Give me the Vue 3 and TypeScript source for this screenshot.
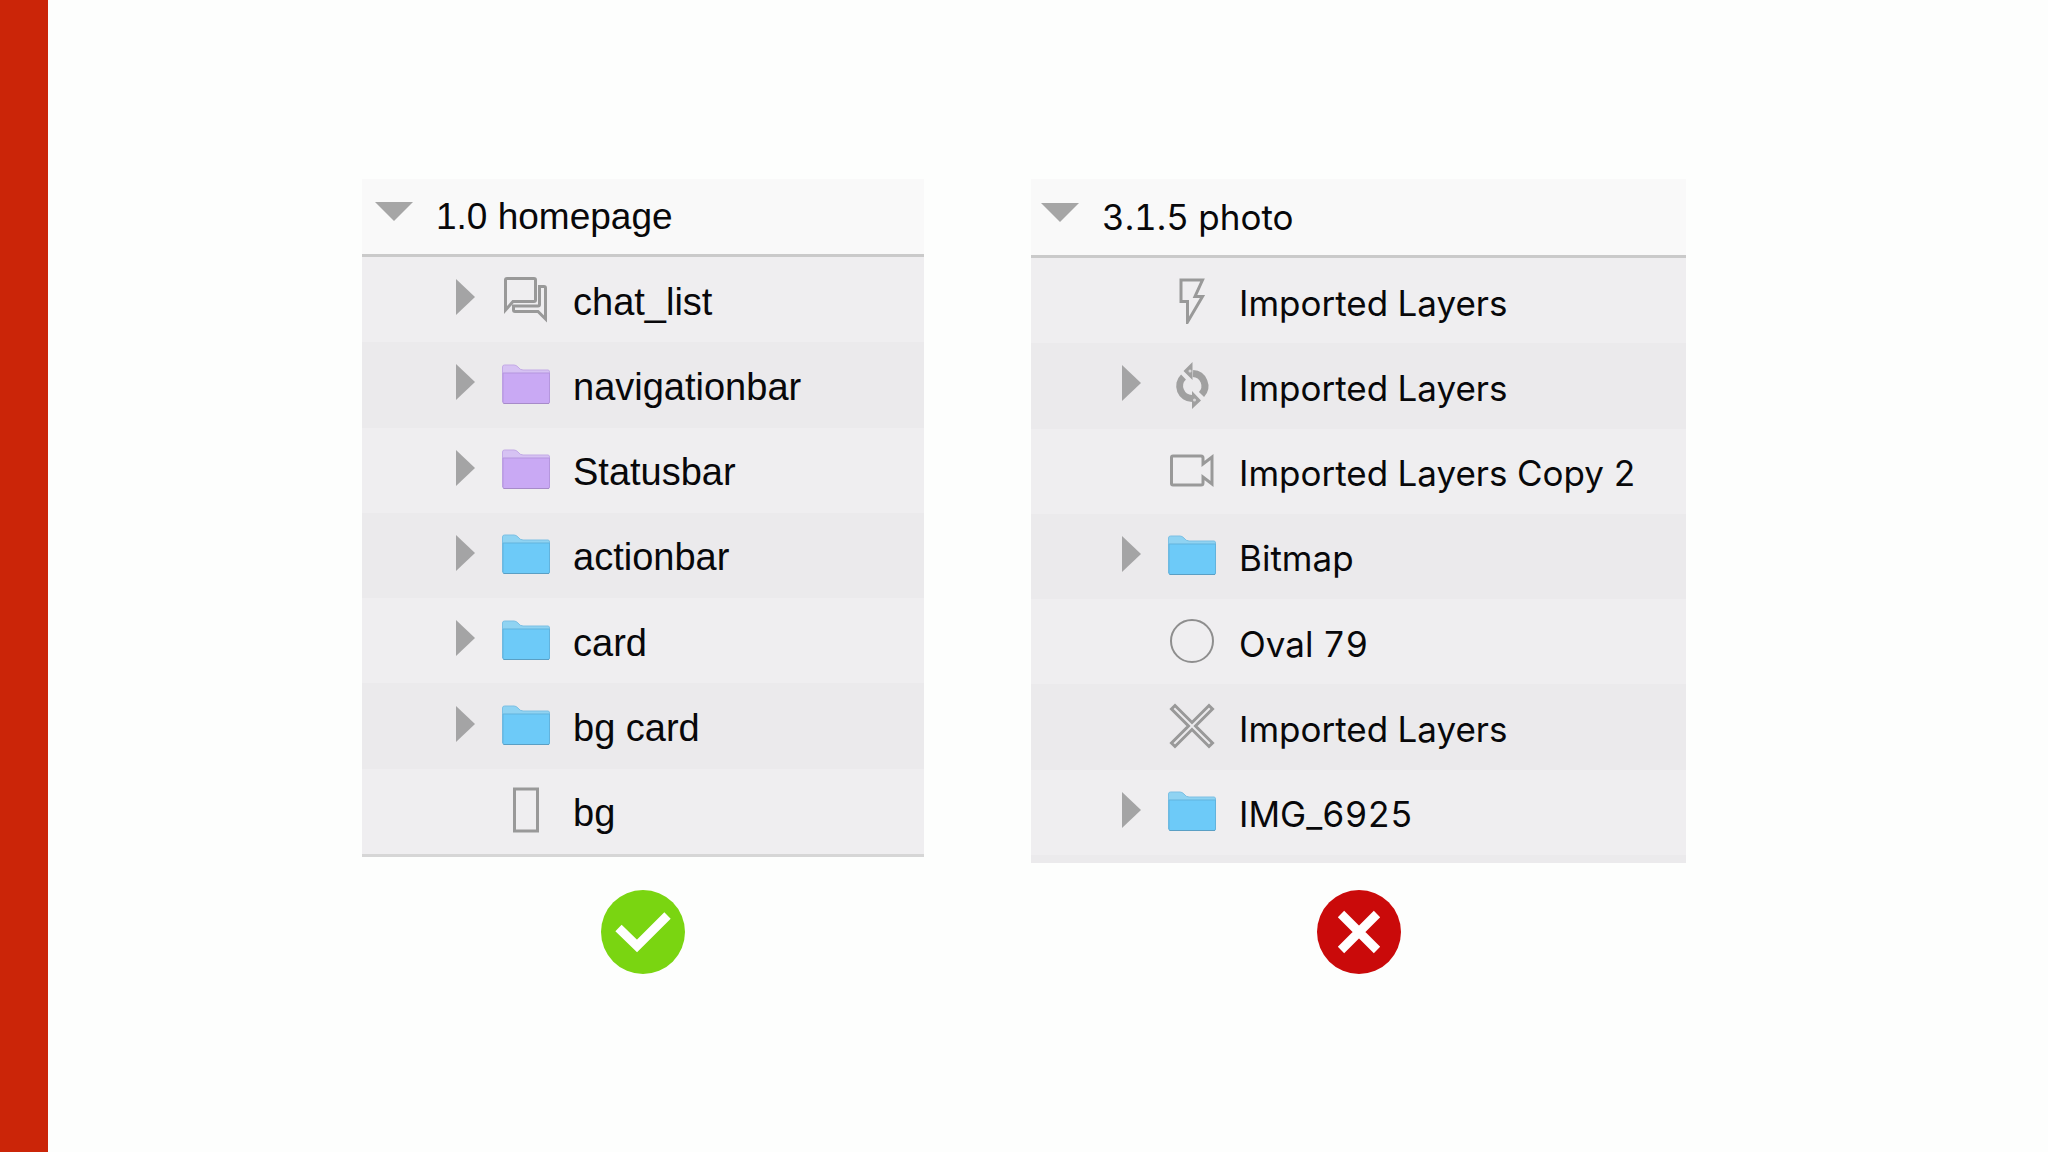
<script setup lang="ts">
type IconName = 'chat' | 'folder-purple' | 'folder-blue' | 'rect' | 'bolt' | 'sync' | 'video' | 'oval' | 'cross'

interface Layer {
  name: string
  icon: IconName
  group: boolean
}

interface Panel {
  key: string
  title: string
  verdict: 'good' | 'bad'
  layers: Layer[]
}

const panels: Panel[] = [
  {
    key: 'named',
    title: '1.0 homepage',
    verdict: 'good',
    layers: [
      { name: 'chat_list', icon: 'chat', group: true },
      { name: 'navigationbar', icon: 'folder-purple', group: true },
      { name: 'Statusbar', icon: 'folder-purple', group: true },
      { name: 'actionbar', icon: 'folder-blue', group: true },
      { name: 'card', icon: 'folder-blue', group: true },
      { name: 'bg card', icon: 'folder-blue', group: true },
      { name: 'bg', icon: 'rect', group: false },
    ],
  },
  {
    key: 'unnamed',
    title: '3.1.5 photo',
    verdict: 'bad',
    layers: [
      { name: 'Imported Layers', icon: 'bolt', group: false },
      { name: 'Imported Layers', icon: 'sync', group: true },
      { name: 'Imported Layers Copy 2', icon: 'video', group: false },
      { name: 'Bitmap', icon: 'folder-blue', group: true },
      { name: 'Oval 79', icon: 'oval', group: false },
      { name: 'Imported Layers', icon: 'cross', group: false },
      { name: 'IMG_6925', icon: 'folder-blue', group: true },
    ],
  },
]
</script>

<template>
  <div class="slide">
    <div class="accent"></div>
    <main class="stage">
      <section v-for="panel in panels" :key="panel.key" class="example" :class="panel.key">
        <div class="panel">
          <h2 class="title">
            <svg class="open" viewBox="0 0 38 19" aria-hidden="true"><path d="M0 0H38L19 19Z" /></svg>
            <span>{{ panel.title }}</span>
          </h2>
          <ul class="layers">
            <li v-for="(layer, i) in panel.layers" :key="i" class="layer">
              <svg class="arrow" viewBox="0 0 19 36" aria-hidden="true">
                <path v-if="layer.group" d="M0 0L19 18L0 36Z" />
              </svg>
              <svg class="icon" viewBox="0 0 48 48" aria-hidden="true">
                <g v-if="layer.icon === 'chat'" class="line">
                  <path d="M3.5 35V5q0-1.500 1.500-1.500H32q1.500 0 1.500 1.500V25q0 1.500-1.500 1.500H11Z" />
                  <path d="M37.500 11.500H42q1.500 0 1.500 1.500V44L36 36.500H13q-1.500 0-1.500-1.500V31H36q1.500 0 1.500-1.500Z" />
                </g>
                <g v-else-if="layer.icon === 'folder-purple'">
                  <path d="M.5 42V7q0-2 2-2H12q2 0 4 2q2 3 5 3H46q1.500 0 1.500 2V42Z" fill="#d6c2f3" stroke="#c3aae6" />
                  <path d="M1 13H47.500V42q0 1.500-1.500 1.500H2.500Q1 43.500 1 42Z" fill="#c9a9f4" stroke="#b596de" />
                  <path d="M1.500 43.500H47" stroke="#a78bc9" />
                </g>
                <g v-else-if="layer.icon === 'folder-blue'">
                  <path d="M.5 42V7q0-2 2-2H12q2 0 4 2q2 3 5 3H46q1.500 0 1.500 2V42Z" fill="#8fd3f2" stroke="#7cc0e4" />
                  <path d="M1 13H47.500V42q0 1.500-1.500 1.500H2.500Q1 43.500 1 42Z" fill="#6dcaf8" stroke="#62b3dd" />
                  <path d="M1.500 43.500H47" stroke="#5a9fc4" />
                </g>
                <rect v-else-if="layer.icon === 'rect'" class="line" x="12.500" y="3" width="23" height="42" />
                <path v-else-if="layer.icon === 'bolt'" class="line" d="M13 4H34.500L27 20.500H34.500L19.500 46V25.500H13Z" />
                <g v-else-if="layer.icon === 'sync'">
                  <path class="ring" d="M15.500 16A12.500 12.500 0 0 0 24 37.500M33.500 33.500A12.500 12.500 0 0 0 25 12.500" />
                  <path class="head" d="M24.500 1V19L15.500 10ZM24 48V30L33 39.500Z" />
                  <circle class="dot" cx="22" cy="10" r="1.500" />
                  <circle class="dot" cx="26.500" cy="39" r="1.500" />
                </g>
                <path v-else-if="layer.icon === 'video'" class="line" d="M5 10H33q2 0 2 2V18L44 11V38L35 31V37q0 2-2 2H5q-1.500 0-1.500-1.500V11.500Q3.500 10 5 10Z" />
                <circle v-else-if="layer.icon === 'oval'" class="line thin" cx="24" cy="24" r="21" />
                <path v-else class="line" d="M3.500 7L7 3.500L24 20.500L41 3.500L44.500 7L27.500 24L44.500 41L41 44.500L24 27.500L7 44.500L3.500 41L20.500 24Z" />
              </svg>
              <span>{{ layer.name }}</span>
            </li>
          </ul>
        </div>
        <svg v-if="panel.verdict === 'good'" class="badge" viewBox="0 0 84 84" role="img" aria-label="Good">
          <circle cx="42" cy="42" r="42" fill="#7ad511" stroke="none" />
          <path d="M17.500 38L36 56L66.500 25.500" />
        </svg>
        <svg v-else class="badge" viewBox="0 0 84 84" role="img" aria-label="Bad">
          <circle cx="42" cy="42" r="42" fill="#ca0a0a" stroke="none" />
          <path d="M24 24L60 60M60 24L24 60" />
        </svg>
      </section>
    </main>
  </div>
</template>

<style>
body {
  margin: 0;
  background: #fdfefd;
}
</style>

<style scoped>
.slide {
  display: flex;
  min-height: 100vh;
  color: #08080a;
}

.accent {
  width: 48px;
  flex: none;
  background: #cb2508;
}

.stage {
  flex: 1;
  display: grid;
  grid-template-columns: 314fr 562fr 107fr 655fr 362fr;
  align-items: start;
  padding-top: 179px;
}

.example {
  display: flex;
  flex-direction: column;
  align-items: center;
  height: 795px;
}

.named {
  grid-column: 2;
  font: 38px/44px "Liberation Sans", Arial, sans-serif;
}

.unnamed {
  grid-column: 4;
  font: 35px/44px Inter, Roboto, sans-serif;
  font-variant-numeric: tabular-nums;
}

.panel {
  width: 100%;
  background: #ebeaec;
}

.named .panel {
  border-bottom: 3px solid #d6d6d6;
}

.unnamed .panel {
  padding-bottom: 8px;
}

.title {
  display: flex;
  align-items: center;
  gap: 23px;
  box-sizing: border-box;
  height: 78px;
  margin: 0;
  padding-left: 13px;
  border-bottom: 3px solid #cacaca;
  background: #f9f9f9;
  font: inherit;
}

.named .title {
  font-size: 37px;
}

.unnamed .title {
  height: 79px;
  padding-left: 10px;
  font-variant-numeric: tabular-nums;
}

.open {
  width: 38px;
  height: 19px;
  margin-bottom: 10px;
  fill: #a6a6a6;
}

.layers {
  display: flex;
  flex-direction: column;
  height: 597px;
  margin: 0;
  padding: 0;
  list-style: none;
}

.layer {
  flex: 1;
  display: flex;
  align-items: center;
  padding-left: 94px;
  background: #efeef0;
}

.unnamed .layer {
  padding-left: 91px;
}

.layer:nth-child(even) {
  background: #ebeaec;
}

.layer span {
  padding-top: 4px;
}

.arrow {
  width: 19px;
  height: 36px;
  margin: 0 27px 5px 0;
  fill: #a4a4a5;
}

.icon {
  width: 48px;
  height: 48px;
  margin: 0 23px 2px 0;
  fill: none;
}

.line {
  fill: none;
  stroke: #999;
  stroke-width: 3;
}

.thin {
  stroke: #8e8e8e;
  stroke-width: 2;
}

.ring {
  stroke: #a0a0a0;
  stroke-width: 7;
}

.head {
  fill: #a0a0a0;
}

.dot {
  fill: #d8d7d9;
}

.badge {
  width: 84px;
  height: 84px;
  margin-top: auto;
  fill: none;
  stroke: #fff;
  stroke-width: 9;
}
</style>
